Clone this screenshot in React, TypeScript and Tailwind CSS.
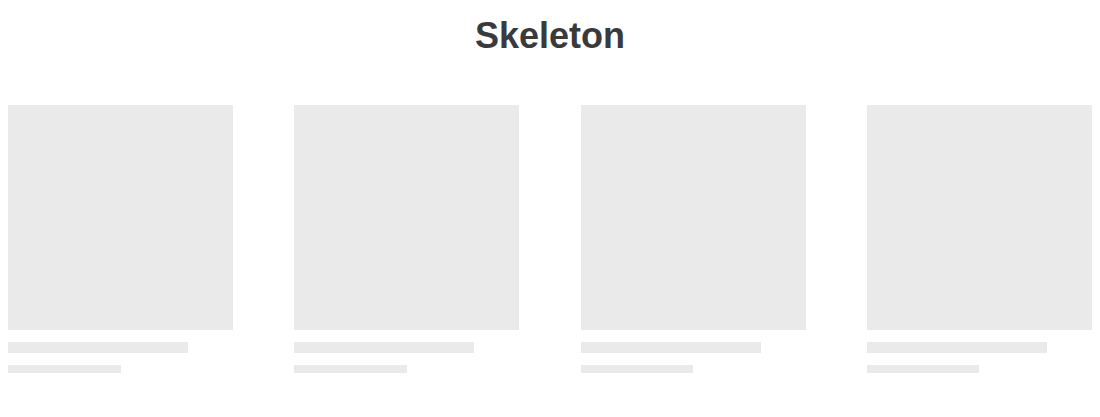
export default function App() {
  const cards = [0, 1, 2, 3];

  return (
    <div className="w-[1100px] h-[417px] bg-white" style={{ fontFamily: '"Liberation Sans", Arial, sans-serif' }}>
      {/* Title */}
      <h1 className="pt-[15px] text-center text-[36px] leading-[41px] font-bold text-[#3a3a3a]">Skeleton</h1>

      {/* Skeleton cards */}
      <div className="mt-[49px] px-2 flex justify-between">
        {cards.map((card) => (
          <div key={card} className="w-[225px] flex flex-col">
            <div className="w-[225px] h-[225px] bg-[#eaeaea]"></div>
            <div className="mt-3 w-[80%] h-[11px] bg-[#eaeaea]"></div>
            <div className="mt-3 w-[50%] h-2 bg-[#eaeaea]"></div>
          </div>
        ))}
      </div>
    </div>
  );
}
